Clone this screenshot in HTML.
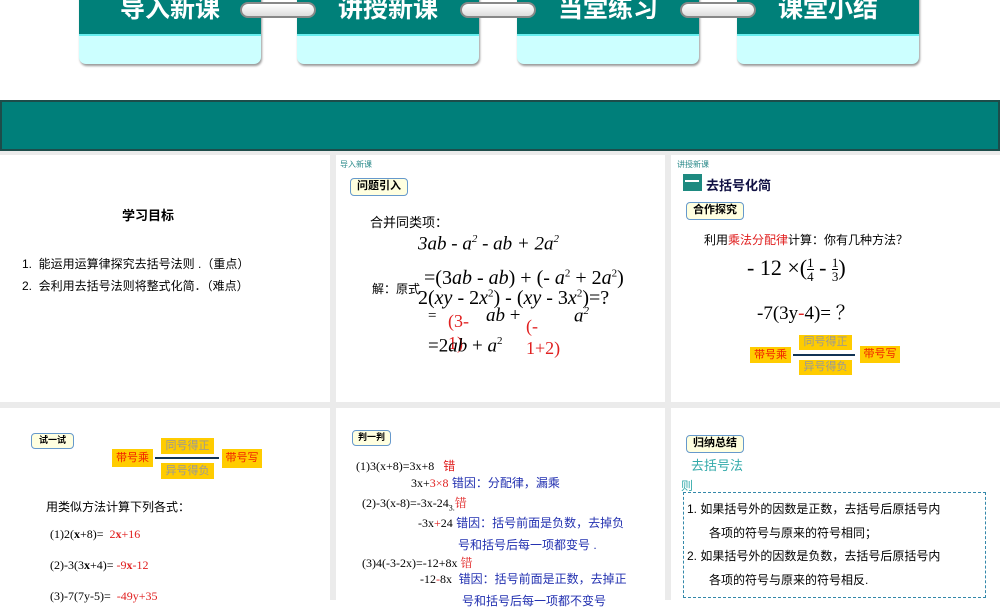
<!DOCTYPE html>
<html><head><meta charset="utf-8"><style>
*{margin:0;padding:0;box-sizing:border-box}
body{width:1000px;height:600px;overflow:hidden;background:#fff;position:relative;font-family:"Liberation Sans","Noto Sans CJK SC",sans-serif;}
.a{position:absolute;white-space:nowrap}
.tab{position:absolute;top:-6px;width:182px;height:70px;border-radius:0 0 7px 7px;background:#ccffff;box-shadow:1px 2px 2px #999;overflow:hidden}
.tab .t{height:42px;background:#008079;border-bottom:2px solid #6ee;color:#fff;font-weight:bold;font-size:25px;text-align:center;line-height:30px}
.conn{position:absolute;top:2px;height:16px;border-radius:8px;background:linear-gradient(#fff,#ddd);border:2px solid #888}
.p{position:absolute;background:#fff}
.lab{position:absolute;border:1.5px solid #69c;border-radius:4px;background:#ffffe0;font-weight:bold;font-size:11px;text-align:center}
.serif{font-family:"Liberation Serif","Noto Serif CJK SC",serif}
sup{font-size:11px}
.r{color:#e02020}
.b{color:#2230b0}
.box{position:absolute;background:#fc0;color:#f02000;font-size:11px;text-align:center}
.box2{position:absolute;background:#fc0;color:#999;font-size:11px;text-align:center}
.fr{display:inline-block;vertical-align:middle;text-align:center;font-size:13px;line-height:13px}
.fr span{display:block}
.fr span:first-child{border-bottom:1px solid #000}
</style></head><body>
<div class="tab" style="left:79px"><div class="t">导入新课</div></div>
<div class="tab" style="left:297px"><div class="t">讲授新课</div></div>
<div class="tab" style="left:517px"><div class="t">当堂练习</div></div>
<div class="tab" style="left:737px"><div class="t">课堂小结</div></div>
<div class="conn" style="left:240px;width:76px"></div>
<div class="conn" style="left:460px;width:76px"></div>
<div class="conn" style="left:680px;width:76px"></div>
<div class="a" style="left:0;top:100px;width:1000px;height:51px;background:#007f7a;border:2px solid #1d4c4a"></div>
<div class="a" style="left:0;top:151px;width:1000px;height:449px;background:#ebebeb"></div>

<div class="p" style="left:0;top:155px;width:330px;height:247px">
<div class="a" style="left:122px;top:50px;font-size:13px;font-weight:bold">学习目标</div>
<div class="a" style="left:22px;top:100px;font-size:12px">1.&nbsp; 能运用运算律探究去括号法则 .（重点）</div>
<div class="a" style="left:22px;top:122px;font-size:12px">2.&nbsp; 会利用去括号法则将整式化简．（难点）</div>
</div>

<div class="p" style="left:336px;top:155px;width:329px;height:247px">
<div class="a" style="left:4px;top:4px;font-size:8px;color:#2a8a8a">导入新课</div>
<div class="lab" style="left:14px;top:23px;width:58px;height:18px;line-height:15px">问题引入</div>
<div class="a" style="left:34px;top:57px;font-size:13px">合并同类项：</div>
<div class="a serif" style="left:82px;top:78px;font-size:19px;font-style:italic">3ab - a<sup>2</sup> - ab + 2a<sup>2</sup></div>
<div class="a" style="left:36px;top:125px;font-size:12px">解：原式</div>
<div class="a serif" style="left:88px;top:112px;font-size:20px">=(3<i>ab</i> - <i>ab</i>) + (- <i>a</i><sup>2</sup> + 2<i>a</i><sup>2</sup>)</div>
<div class="a serif" style="left:82px;top:132px;font-size:20px">2(<i>xy</i> - 2<i>x</i><sup>2</sup>) - (<i>xy</i> - 3<i>x</i><sup>2</sup>)=?</div>
<div class="a serif" style="left:92px;top:153px;font-size:15px">=</div>
<div class="a serif r" style="left:112px;top:155px;font-size:18px;line-height:22px">(3-<br>1)</div>
<div class="a serif" style="left:150px;top:150px;font-size:19px"><i>ab</i> +</div>
<div class="a serif r" style="left:190px;top:160px;font-size:18px;line-height:22px">(-<br>1+2)</div>
<div class="a serif" style="left:238px;top:150px;font-size:19px;font-style:italic">a<sup>2</sup></div>
<div class="a serif" style="left:92px;top:180px;font-size:19px">=2<i>ab</i> + <i>a</i><sup>2</sup></div>
</div>

<div class="p" style="left:671px;top:155px;width:329px;height:247px">
<div class="a" style="left:6px;top:4px;font-size:8px;color:#2a8a8a">讲授新课</div>
<div class="a" style="left:12px;top:19px;width:19px;height:17px;background:#1e8a80"></div>
<div class="a" style="left:14px;top:25px;width:14px;height:2px;background:#fff"></div>
<div class="a" style="left:35px;top:20px;font-size:13px;font-weight:bold;color:#114">去括号化简</div>
<div class="lab" style="left:15px;top:47px;width:58px;height:18px;line-height:15px">合作探究</div>
<div class="a" style="left:33px;top:76px;font-size:12px">利用<span class="r">乘法分配律</span>计算：你有几种方法？</div>
<div class="a serif" style="left:76px;top:100px;font-size:22px">- 12 ×(<span class="fr"><span>1</span><span>4</span></span> - <span class="fr"><span>1</span><span>3</span></span>)</div>
<div class="a serif" style="left:86px;top:143px;font-size:19px">-7(3y<span class="r">-</span>4)= ？</div>
<div class="box" style="left:79px;top:192px;width:41px;height:16px;line-height:16px">带号乘</div>
<div class="box2" style="left:128px;top:180px;width:53px;height:15px;line-height:15px">同号得正</div>
<div class="box2" style="left:128px;top:205px;width:53px;height:15px;line-height:15px">异号得负</div>
<div class="a" style="left:122px;top:199px;width:62px;height:2px;background:#135"></div>
<div class="box" style="left:189px;top:191px;width:40px;height:17px;line-height:17px">带号写</div>
</div>

<div class="p" style="left:0;top:408px;width:330px;height:192px">
<div class="lab" style="left:31px;top:25px;width:43px;height:16px;line-height:13px;font-size:9px">试一试</div>
<div class="box" style="left:112px;top:41px;width:41px;height:18px;line-height:18px">带号乘</div>
<div class="box2" style="left:161px;top:30px;width:53px;height:16px;line-height:16px">同号得正</div>
<div class="box2" style="left:161px;top:55px;width:53px;height:16px;line-height:16px">异号得负</div>
<div class="a" style="left:155px;top:49px;width:64px;height:2px;background:#135"></div>
<div class="box" style="left:222px;top:41px;width:40px;height:19px;line-height:19px">带号写</div>
<div class="a" style="left:46px;top:90px;font-size:12px">用类似方法计算下列各式：</div>
<div class="a serif" style="left:50px;top:119px;font-size:12px">(1)2(<b>x</b>+8)= &nbsp;<span class="r">2<b>x</b>+16</span></div>
<div class="a serif" style="left:50px;top:150px;font-size:12px">(2)-3(3<b>x</b>+4)= <span class="r">-9<b>x</b>-12</span></div>
<div class="a serif" style="left:50px;top:181px;font-size:12px">(3)-7(7y-5)= &nbsp;<span class="r">-49y+35</span></div>
</div>

<div class="p" style="left:336px;top:408px;width:329px;height:192px">
<div class="lab" style="left:16px;top:22px;width:39px;height:16px;line-height:13px;font-size:9px">判一判</div>
<div class="a serif" style="left:20px;top:49px;font-size:12px">(1)3(x+8)=3x+8 &nbsp;&nbsp;<span class="r" style="font-family:'Noto Sans CJK SC'">错</span></div>
<div class="a" style="left:75px;top:66px;font-size:12px"><span class="serif">3x+<span class="r">3×8</span></span> <span class="b">错因：分配律，漏乘</span></div>
<div class="a serif" style="left:26px;top:86px;font-size:12px">(2)-3(x-8)=-3x-24<sub style="font-size:8px">3.</sub><span class="r">错</span></div>
<div class="a" style="left:82px;top:106px;font-size:12px"><span class="serif">-3x<span class="r">+</span>24</span> <span class="b">错因：括号前面是负数，去掉负</span></div>
<div class="a b" style="left:122px;top:128px;font-size:12px">号和括号后每一项都变号 .</div>
<div class="a serif" style="left:26px;top:146px;font-size:12px">(3)4(-3-2x)=-12+8x <span class="r">错</span></div>
<div class="a" style="left:84px;top:162px;font-size:12px"><span class="serif">-12<span class="r">-</span>8x</span> &nbsp;<span class="b">错因：括号前面是正数，去掉正</span></div>
<div class="a b" style="left:126px;top:184px;font-size:12px">号和括号后每一项都不变号</div>
</div>

<div class="p" style="left:671px;top:408px;width:329px;height:192px">
<div class="lab" style="left:15px;top:27px;width:58px;height:18px;line-height:15px">归纳总结</div>
<div class="a" style="left:20px;top:47px;font-size:13px;color:#3aa">去括号法</div>
<div class="a" style="left:10px;top:69px;font-size:12px;color:#3aa">则</div>
<div class="a" style="left:12px;top:84px;width:303px;height:106px;border:1px dashed #38a"></div>
<div class="a" style="left:16px;top:92px;font-size:12px">1. 如果括号外的因数是正数，去括号后原括号内</div>
<div class="a" style="left:38px;top:116px;font-size:12px">各项的符号与原来的符号相同；</div>
<div class="a" style="left:16px;top:139px;font-size:12px">2. 如果括号外的因数是负数，去括号后原括号内</div>
<div class="a" style="left:38px;top:163px;font-size:12px">各项的符号与原来的符号相反.</div>
</div>
</body></html>
